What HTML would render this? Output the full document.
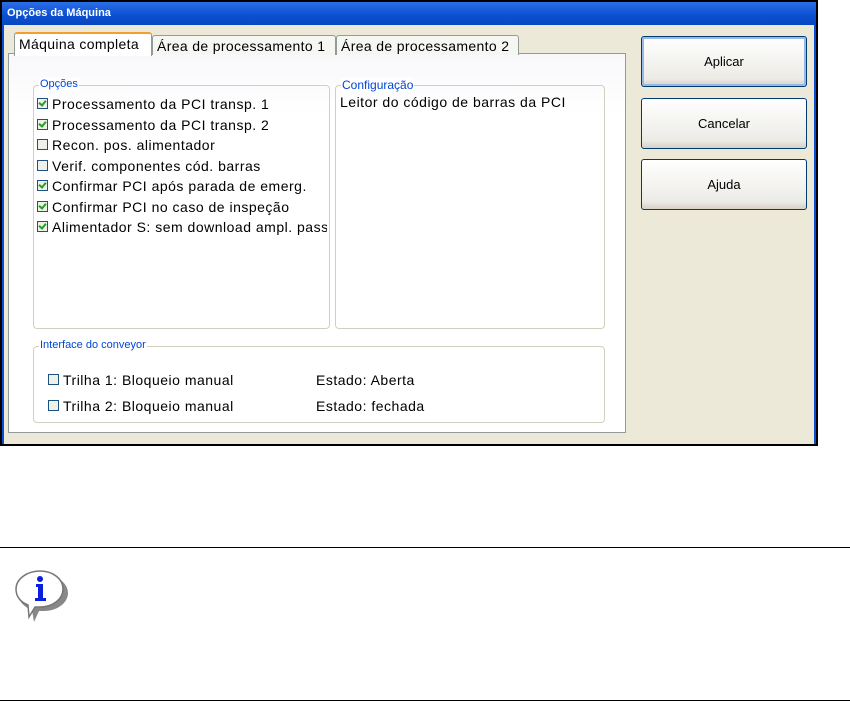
<!DOCTYPE html>
<html><head><style>
body{margin:0;width:850px;height:702px;background:#fff;position:relative;font-family:"Liberation Sans",sans-serif;overflow:hidden}
.a{position:absolute}
.win{left:0;top:0;width:814px;height:442px;border:2px solid #000;background:#ece9d8}
.title{left:2px;top:2px;width:814px;height:23px;background:linear-gradient(#2a6ee8,#0a4fd0 60%,#0847c0);color:#fff;font-size:11px;font-weight:bold;line-height:23px;padding-left:5px;box-sizing:border-box}
.tab{background:#f6f6f2;border:1px solid #919b9c;border-bottom:none;font-size:14px;letter-spacing:0.35px;color:#000;box-sizing:border-box;padding-left:4px;border-radius:3px 3px 0 0;white-space:nowrap;overflow:hidden}
.panel{left:8px;top:53px;width:618px;height:380px;background:linear-gradient(#f8f8fb,#fff 60px);border:1px solid #919b9c;box-sizing:border-box}
.grp{border:1px solid #d0d0bf;border-radius:4px;box-sizing:border-box}
.leg{font-size:11px;color:#0046d5;background:#fff;padding:0 1px}
.row{font-size:14px;letter-spacing:0.5px;color:#000;left:37px;white-space:nowrap}
.cb{display:inline-block;width:9px;height:9px;border:1px solid #1c5180;background:#f0f0ea;vertical-align:0px;margin-right:4px;position:relative;letter-spacing:0}
.cb.c::after{content:"";position:absolute;left:2px;top:0px;width:3px;height:5px;border:solid #21a121;border-width:0 2px 2px 0;transform:rotate(40deg)}
.btn{left:641px;width:166px;height:51px;border:1px solid #003c74;border-radius:3px;background:linear-gradient(#fff,#ecebe6 85%,#d6d0c5);box-sizing:border-box;font-size:13px;text-align:center;line-height:49px}
</style></head><body>
<div class="a win"></div>
<div class="a title">Opções da Máquina</div>
<div class="a" style="left:2px;top:25px;width:2px;height:419px;background:#0a4fd0"></div>
<div class="a" style="left:814px;top:25px;width:2px;height:419px;background:#0a4fd0"></div>
<div class="a panel"></div>
<div class="a tab" style="left:14px;top:32px;width:138px;height:24px;background:#fff;border-top:2px solid #f2a02a;line-height:21px;z-index:2">Máquina completa</div>
<div class="a tab" style="left:152px;top:35px;width:184px;height:20px;line-height:20px">Área de processamento 1</div>
<div class="a tab" style="left:336px;top:35px;width:183px;height:20px;line-height:20px">Área de processamento 2</div>

<div class="a grp" style="left:33px;top:85px;width:297px;height:244px"></div>
<div class="a leg" style="left:39px;top:78px">Opções</div>
<div class="a grp" style="left:335px;top:85px;width:270px;height:244px"></div>
<div class="a leg" style="left:341px;top:78px;font-size:12px">Configuração</div>
<div class="a row" style="left:340px;top:94px">Leitor do código de barras da PCI</div>

<div class="a" style="left:37px;top:94px;width:290px;overflow:hidden">
<div class="row" style="position:static;line-height:20.5px"><span class="cb c"></span>Processamento da PCI transp. 1</div>
<div class="row" style="position:static;line-height:20.5px"><span class="cb c"></span>Processamento da PCI transp. 2</div>
<div class="row" style="position:static;line-height:20.5px"><span class="cb"></span>Recon. pos. alimentador</div>
<div class="row" style="position:static;line-height:20.5px"><span class="cb"></span>Verif. componentes cód. barras</div>
<div class="row" style="position:static;line-height:20.5px"><span class="cb c"></span>Confirmar PCI após parada de emerg.</div>
<div class="row" style="position:static;line-height:20.5px"><span class="cb c"></span>Confirmar PCI no caso de inspeção</div>
<div class="row" style="position:static;line-height:20.5px"><span class="cb c"></span>Alimentador S: sem download ampl. passo</div>
</div>

<div class="a grp" style="left:33px;top:346px;width:572px;height:77px"></div>
<div class="a leg" style="left:39px;top:339px">Interface do conveyor</div>
<div class="a row" style="left:48px;top:372px"><span class="cb"></span>Trilha 1: Bloqueio manual</div>
<div class="a row" style="left:48px;top:398px"><span class="cb"></span>Trilha 2: Bloqueio manual</div>
<div class="a row" style="left:316px;top:372px">Estado: Aberta</div>
<div class="a row" style="left:316px;top:398px">Estado: fechada</div>

<div class="a btn" style="top:36px;box-shadow:inset 0 0 0 2px #98b8ea">Aplicar</div>
<div class="a btn" style="top:98px">Cancelar</div>
<div class="a btn" style="top:159px">Ajuda</div>

<div class="a" style="left:0;top:547px;width:850px;height:1px;background:#000"></div>
<div class="a" style="left:0;top:700px;width:850px;height:1px;background:#000"></div>
<svg class="a" style="left:10px;top:565px" width="62" height="62" viewBox="0 0 62 62">
<path d="M32 8c13 0 24 8 24 18s-11 18-24 18c-2 0-3 0-5 0l-5 11-2-12C12 40 6 34 6 26 6 16 18 8 32 8z" fill="#888" transform="translate(2,2)"/>
<path d="M30 6c13 0 23 8 23 18s-10 18-23 18c-2 0-3 0-5 0l-6 10-1-12C10 37 6 31 6 24 6 14 17 6 30 6z" fill="#fff" stroke="#777" stroke-width="1.5"/>
<circle cx="30" cy="14" r="3" fill="#0a1ee0"/>
<path d="M26 19h7v14h3v3h-11v-3h3v-11h-2z" fill="#0a1ee0"/>
</svg>
</body></html>
